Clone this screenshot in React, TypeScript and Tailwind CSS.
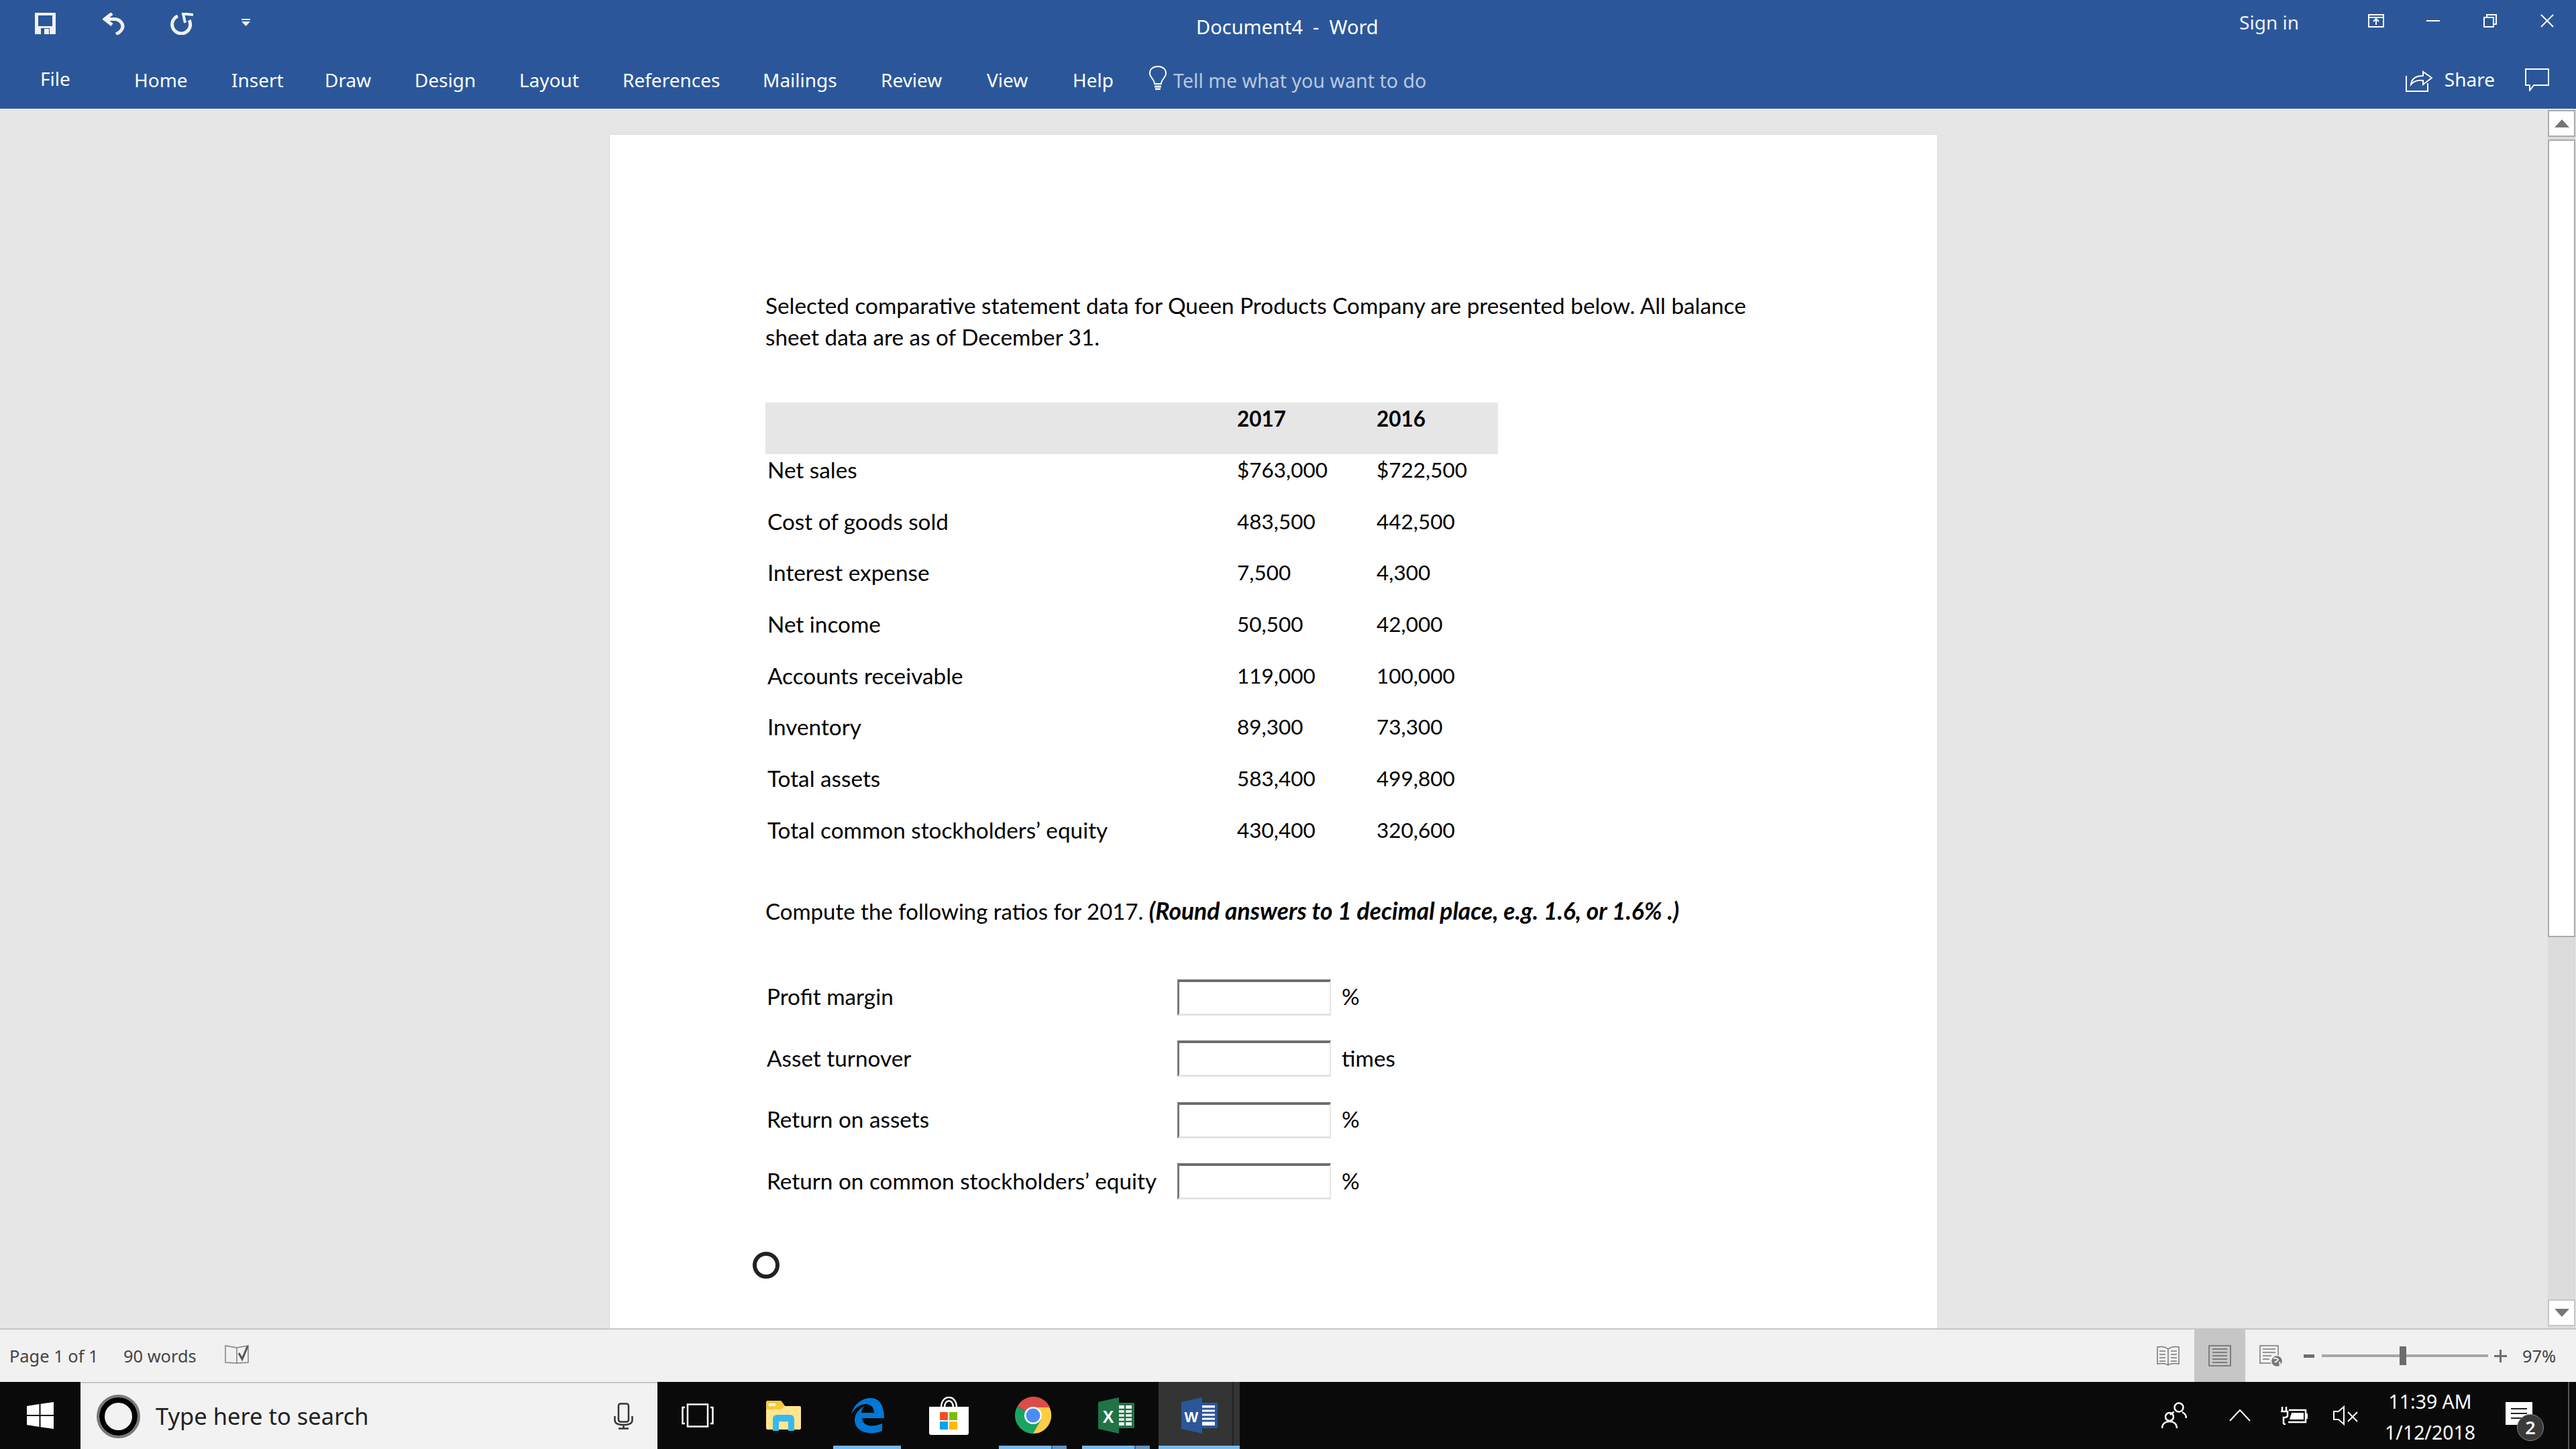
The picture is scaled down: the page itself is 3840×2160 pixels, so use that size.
const tabs = [
  { name: "Home", w: "w-[79px]" },
  { name: "Insert", w: "w-[73px]" },
  { name: "Draw", w: "w-[68px]" },
  { name: "Design", w: "w-[90px]" },
  { name: "Layout", w: "w-[88px]" },
  { name: "References", w: "w-[143px]" },
  { name: "Mailings", w: "w-[110px]" },
  { name: "Review", w: "w-[92px]" },
  { name: "View", w: "w-[62px]" },
  { name: "Help", w: "w-[60px]" },
];

const rows = [
  ["Net sales", "$763,000", "$722,500"],
  ["Cost of goods sold", "483,500", "442,500"],
  ["Interest expense", "7,500", "4,300"],
  ["Net income", "50,500", "42,000"],
  ["Accounts receivable", "119,000", "100,000"],
  ["Inventory", "89,300", "73,300"],
  ["Total assets", "583,400", "499,800"],
  ["Total common stockholders’ equity", "430,400", "320,600"],
];

const ratios = [
  ["Profit margin", "%"],
  ["Asset turnover", "times"],
  ["Return on assets", "%"],
  ["Return on common stockholders’ equity", "%"],
];

const TitleBar = () => (
  <div className="h-[162px] bg-[#2b579a] text-white font-['Noto_Sans',sans-serif] shrink-0">
    {/* Quick access row */}
    <div className="h-[81px] flex items-start relative">
      <svg className="ml-[52px] mt-[19px] shrink-0" width="31" height="32" viewBox="0 0 31 32">
        <path d="M1 0H30a1 1 0 0 1 1 1V31a1 1 0 0 1-1 1H1a1 1 0 0 1-1-1V1a1 1 0 0 1 1-1Z" fill="#f1f1f1" />
        <rect x="5" y="4" width="21" height="16" fill="#2b579a" />
        <rect x="9" y="23" width="13" height="9" fill="#2b579a" />
        <rect x="14" y="24" width="7" height="8" fill="#f1f1f1" />
      </svg>
      <svg className="ml-[70px] mt-[19px] shrink-0" width="34" height="33" viewBox="0 0 34 33" fill="none" stroke="#f1f1f1" strokeWidth="5">
        <path d="M14 1L3 9.5L14 18" />
        <path d="M4 9.5H18C27 10 32 18 29 24C27 28 24 30 20 32" />
      </svg>
      <svg className="ml-[66px] mt-[19px] shrink-0" width="36" height="33" viewBox="0 0 36 33" fill="none" stroke="#f1f1f1">
        <path d="M12 5A13.5 13.5 0 1 0 29 11" strokeWidth="5" />
        <path d="M35 3L20 1.5L23 15" strokeWidth="4" />
      </svg>
      <svg className="ml-[71px] mt-[28px] shrink-0" width="13" height="11" viewBox="0 0 13 11" fill="#f1f1f1">
        <rect width="13" height="2" />
        <path d="M0 4H13L6.5 11Z" />
      </svg>
      <div className="absolute left-[1783px] top-[20px] text-[29px] leading-[40px] whitespace-pre">Document4  -  Word</div>
      <div className="ml-auto flex items-start">
        <span className="text-[28px] leading-[40px] mt-[13px] text-[#f1f1f1]">Sign in</span>
        <svg className="ml-[103px] mt-[21px]" width="24" height="20" viewBox="0 0 24 20" fill="none" stroke="#fff" strokeWidth="2">
          <rect x="1" y="1" width="22" height="18" />
          <path d="M1 5H23M12 16V8M8 11L12 7L16 11" />
        </svg>
        <svg className="ml-[63px] mt-[30px]" width="20" height="2" viewBox="0 0 20 2">
          <rect width="20" height="2" fill="#fff" />
        </svg>
        <svg className="ml-[65px] mt-[21px]" width="20" height="20" viewBox="0 0 20 20" fill="none" stroke="#fff" strokeWidth="2">
          <rect x="1" y="5" width="14" height="14" />
          <path d="M5 5V1H19V15H15" />
        </svg>
        <svg className="ml-[65px] mr-[33px] mt-[21px]" width="20" height="20" viewBox="0 0 20 20" fill="none" stroke="#fff" strokeWidth="2">
          <path d="M1 1L19 19M19 1L1 19" />
        </svg>
      </div>
    </div>
    {/* Tabs row */}
    <div className="h-[81px] flex items-start">
      <span className="ml-[60px] w-[140px] text-[28px] leading-[40px] mt-[16px]">File</span>
      <div className="flex gap-[66px] text-[28px] leading-[40px] mt-[18px]">
        {tabs.map((tab) => (
          <span key={tab.name} className={`${tab.w} whitespace-nowrap`}>
            {tab.name}
          </span>
        ))}
      </div>
      <svg className="ml-[54px] mt-[17px] shrink-0" width="26" height="36" viewBox="0 0 26 36" fill="none" stroke="#fff" strokeWidth="2">
        <path d="M8 27C8 20 1 18 1 11C1 5 6 1 13 1C20 1 25 5 25 11C25 18 18 20 18 27Z" />
        <path d="M8 31H18M9 35H17" strokeWidth="3" />
      </svg>
      <span className="ml-[10px] text-[28.6px] leading-[40px] mt-[19px] text-[#b9c7de] whitespace-nowrap">Tell me what you want to do</span>
      <div className="ml-auto flex items-start">
        <svg className="mt-[19px]" width="40" height="37" viewBox="0 0 40 37" fill="none" stroke="#fff" strokeWidth="2">
          <path d="M1 13V36H33V24" />
          <path d="M8 26C9 17 15 13 26 13V7L39 16L26 26V20C18 19 12 21 8 26Z" />
        </svg>
        <span className="ml-[18px] text-[28px] leading-[40px] mt-[17px]">Share</span>
        <svg className="ml-[45px] mr-[40px] mt-[21px]" width="36" height="34" viewBox="0 0 36 34" fill="none" stroke="#fff" strokeWidth="2">
          <path d="M1 1H35V25H13L7 33V25H1Z" />
        </svg>
      </div>
    </div>
  </div>
);

const ScrollBar = () => (
  <div className="w-[42px] shrink-0 bg-[#dcdcdc] border-r border-[#e6e6e6] flex flex-col">
    <div className="h-[2px] bg-[#e6e6e6]" />
    <div className="h-[40px] bg-white border-2 border-[#ababab] flex items-center justify-center">
      <svg width="22" height="12" viewBox="0 0 22 12">
        <path d="M11 0L22 12H0Z" fill="#767676" />
      </svg>
    </div>
    <div className="h-[4px]" />
    <div className="h-[1189px] bg-white border-2 border-[#ababab]" />
    <div className="flex-1" />
    <div className="h-[40px] bg-white border-2 border-[#c6c6c6] flex items-center justify-center">
      <svg width="22" height="12" viewBox="0 0 22 12">
        <path d="M0 0H22L11 12Z" fill="#767676" />
      </svg>
    </div>
    <div className="h-[3px]" />
  </div>
);

const DocumentPage = () => (
  <div className="ml-[908px] w-[1981px] mt-[38px] bg-white border-t border-x border-[#dcdcdc] pl-[232px] pt-[231px] text-black font-['Lato',sans-serif] text-[33.3px] leading-[47px] shrink-0 h-[2200px]">
    <p className="w-[1500px] whitespace-nowrap">
      Selected comparative statement data for Queen Products Company are presented below. All balance
      <br />
      sheet data are as of December 31.
    </p>

    <div className="mt-[74px] w-[1092px]">
      <div className="grid grid-cols-[703px_208px_181px] h-[77px] bg-[#e6e6e6] font-bold text-[31.5px] pt-[1px]">
        <span />
        <span>2017</span>
        <span>2016</span>
      </div>
      {rows.map(([label, a, b]) => (
        <div key={label} className="grid grid-cols-[703px_208px_181px] h-[76.7px]">
          <span className="pl-[3px] whitespace-nowrap">{label}</span>
          <span className="text-[31.5px]">{a}</span>
          <span className="text-[31.5px]">{b}</span>
        </div>
      ))}
    </div>

    <p className="mt-[43px] whitespace-nowrap text-[33px]">
      Compute the following ratios for 2017. <b className="italic font-bold text-[35.4px]">(Round answers to 1 decimal place, e.g. 1.6, or 1.6% .)</b>
    </p>

    <div className="mt-[78px] flex flex-col gap-[37.5px]">
      {ratios.map(([label, unit]) => (
        <div key={label} className="flex items-center h-[54px]">
          <span className="w-[614px] pl-[2px] -mt-[2px] whitespace-nowrap">{label}</span>
          <div className="w-[229px] h-[54px] bg-white border-t-[4px] border-l-[3px] border-r-2 border-b-[3px] border-t-[#6e6e6e] border-l-[#7a7a7a] border-r-[#e6e6e6] border-b-[#e3e3e3]" />
          <span className="ml-[16px] -mt-[2px]">{unit}</span>
        </div>
      ))}
    </div>

    <div className="mt-[78px] -ml-[19px] w-[40px] h-[40px] rounded-full border-[6px] border-[#222]" />
  </div>
);

const StatusBar = () => (
  <div className="h-[80px] bg-[#f1f1f1] border-t-2 border-[#c6c6c6] flex items-center text-[#444] font-['Noto_Sans',sans-serif] text-[25.4px] shrink-0">
    <span className="ml-[14px] w-[131px] whitespace-nowrap">Page 1 of 1</span>
    <span className="ml-[39px] w-[108px] whitespace-nowrap">90 words</span>
    <svg className="ml-[43px] -mt-[4px]" width="36" height="28" viewBox="0 0 36 28" fill="none" stroke="#808080" strokeWidth="1.5">
      <path d="M1 1L18 4L35 1V26L18 27L1 26Z" />
      <path d="M18 4V27" />
      <path d="M21 12L26 21L34 2" stroke="#555" strokeWidth="3" />
    </svg>
    <div className="ml-auto flex items-center h-full">
      <svg width="34" height="30" viewBox="0 0 34 30" fill="none" stroke="#777" strokeWidth="1.5">
        <path d="M1 2C7 1 13 2 17 5C21 2 27 1 33 2V27C27 26 21 26 17 29C13 26 7 26 1 27Z" />
        <path d="M17 5V29M4 8H13M4 13H13M4 18H13M4 23H13M21 8H30M21 13H30M21 18H30M21 23H30" />
      </svg>
      <div className="ml-[22px] w-[76px] h-full bg-[#c6c6c6] flex items-center justify-center">
        <svg width="34" height="32" viewBox="0 0 34 32" fill="none" stroke="#666" strokeWidth="1.5">
          <rect x="1" y="1" width="32" height="30" />
          <path d="M6 6H28M6 11H28M6 16H28M6 21H28M6 26H28" />
        </svg>
      </div>
      <svg className="ml-[21px]" width="35" height="33" viewBox="0 0 35 33" fill="none" stroke="#777" strokeWidth="1.5">
        <path d="M1 1H28V27H1Z" />
        <path d="M5 6H24M5 11H24M5 16H18M5 21H15" />
        <circle cx="26" cy="24" r="8.5" fill="#777" stroke="#f1f1f1" />
        <path d="M21 20C24 19 27 20 28 22C27 25 24 24 23 26M29 26C31 26 32 27 30 30" stroke="#f1f1f1" strokeWidth="2" />
      </svg>
      <div className="ml-[31px] w-[16px] h-[5px] bg-[#6d6d6d]" />
      <div className="ml-[11px] w-[248px] h-[4px] bg-[#a6a6a6] flex items-center">
        <div className="ml-[116px] w-[10px] h-[28px] bg-[#6d6d6d] shrink-0" />
      </div>
      <svg className="ml-[9px]" width="19" height="19" viewBox="0 0 19 19" fill="#6d6d6d">
        <path d="M8 0H11V8H19V11H11V19H8V11H0V8H8Z" />
      </svg>
      <span className="ml-[23px] mr-[30px] w-[50px] whitespace-nowrap">97%</span>
    </div>
  </div>
);

const TaskIcon = ({ active, stacked, children }: { active?: boolean; stacked?: boolean; children: React.ReactNode }) => (
  <div className={`h-[100px] flex items-center justify-center relative shrink-0 ${active ? "w-[121px] bg-[#343434]" : "w-[101px]"}`}>
    {children}
    {(active || stacked) && <div className="absolute left-0 right-0 bottom-0 h-[5px] bg-[#76b9ed]" />}
    {stacked && <div className="absolute right-0 bottom-0 w-[23px] h-[5px] bg-[#5f95c4] border-l-2 border-[#3f6485]" />}
  </div>
);

const Taskbar = () => (
  <div className="h-[100px] bg-[#0a0a0a] flex items-center shrink-0 relative">
    <div className="w-[120px] h-full flex items-center justify-center">
      <svg width="40" height="40" viewBox="0 0 40 40" fill="#fff">
        <path d="M0 6L18.5 3V19H0ZM20.5 2.7L40 0V19H20.5ZM0 21H18.5V37L0 34ZM20.5 21H40V40L20.5 37.3Z" />
      </svg>
    </div>
    <div className="w-[860px] h-full bg-[#f2f2f2] border-t-2 border-[#c6c6c6] flex items-center">
      <div className="ml-[24px] w-[65px] h-[65px] rounded-full border-[4px] border-[#7a7a7a] shrink-0">
        <div className="w-full h-full rounded-full border-[8px] border-black" />
      </div>
      <span className="ml-[23px] font-['Noto_Sans',sans-serif] text-[34.5px] text-[#222] whitespace-nowrap">Type here to search</span>
      <svg className="ml-auto mr-[36px]" width="29" height="40" viewBox="0 0 29 40" fill="none" stroke="#333" strokeWidth="2.5">
        <rect x="7" y="1.5" width="15" height="27" rx="3" />
        <path d="M1.5 20V26C1.5 31 6 33 14.5 33C23 33 27.5 31 27.5 26V20M14.5 33V38M7 38.5H22" />
      </svg>
    </div>
    {/* Task view */}
    <div className="ml-[36px] shrink-0">
      <svg width="48" height="36" viewBox="0 0 48 36" fill="none" stroke="#fff" strokeWidth="2.5">
        <rect x="9" y="1.5" width="30" height="33" />
        <path d="M5 6H1.5V30H5M43 6H46.5V30H43" />
      </svg>
    </div>
    {/* Explorer */}
    <svg className="ml-[78px] shrink-0" width="52" height="46" viewBox="0 0 52 46">
      <path d="M0 4a3 3 0 0 1 3-3H22L28 9H50a2 2 0 0 1 2 2V42a2 2 0 0 1-2 2H2a2 2 0 0 1-2-2Z" fill="#ffe68f" />
      <path d="M0 4a3 3 0 0 1 3-3H22L28 9L22 14H0Z" fill="#f9c93c" />
      <rect x="4" y="5" width="10" height="4" fill="#fff" />
      <path d="M10 46V28a6 6 0 0 1 6-6H36a6 6 0 0 1 6 6V46H33V32H19V46Z" fill="#3ab7ee" />
    </svg>
    <div className="ml-[48px] flex">
      <div className="w-[101px] h-[100px] flex items-center justify-center relative shrink-0">
        {/* Edge */}
        <svg width="50" height="53" viewBox="0 0 50 53">
          <path d="M1 24C5 8 18 0 30 0C42 0 50 10 50 30H17C18 41 30 45 47 38V49C30 56 7 52 6 33C6 24 12 16 21 12C17 16 16 19 16 22H35C35 14 30 9 23 9C14 9 6 15 1 24Z" fill="#0078d7" />
        </svg>
        <div className="absolute left-0 right-0 bottom-0 h-[5px] bg-[#76b9ed]" />
      </div>
    </div>
    <div className="ml-[42px] shrink-0">
      {/* Store */}
      <svg width="59" height="57" viewBox="0 0 59 57">
        <path d="M18 16C18 -4 41 -4 41 16M23 16C23 3 36 3 36 16" fill="none" stroke="#fff" strokeWidth="2.5" />
        <path d="M0 15H59V54a3 3 0 0 1-3 3H3a3 3 0 0 1-3-3Z" fill="#fff" />
        <rect x="16" y="23" width="12" height="12" fill="#f25022" />
        <rect x="30" y="23" width="12" height="12" fill="#7fba00" />
        <rect x="16" y="37" width="12" height="12" fill="#00a4ef" />
        <rect x="30" y="37" width="12" height="12" fill="#ffb900" />
      </svg>
    </div>
    <div className="ml-[45px] flex">
      <TaskIcon stacked>
        {/* Chrome */}
        <svg width="56" height="56" viewBox="0 0 56 56">
          <path d="M28 28L4.6 14.5A27 27 0 0 1 52.4 14.5Z" fill="#db4d45" />
          <path d="M28 16H52.4A27 27 0 0 1 28 55Z" fill="#fdcd45" />
          <path d="M28 28L4.6 14.5A27 27 0 0 0 28 55L40 34Z" fill="#1ba362" />
          <path d="M16 21L28 28V16H52.4L53 14.5H28Z" fill="#db4d45" />
          <circle cx="28" cy="28" r="13" fill="#fff" />
          <circle cx="28" cy="28" r="10.5" fill="#4e8cf5" />
        </svg>
      </TaskIcon>
    </div>
    <div className="ml-[23px] flex">
      <TaskIcon stacked>
        {/* Excel */}
        <svg width="54" height="54" viewBox="0 0 54 54">
          <rect x="26" y="8" width="28" height="38" rx="2" fill="#217346" />
          <rect x="31" y="12" width="19" height="30" fill="#fff" />
          <path d="M31 18H50M31 24H50M31 30H50M31 36H50M40 12V42" stroke="#217346" strokeWidth="2.5" />
          <path d="M0 7L31 0V54L0 47Z" fill="#217346" />
          <text x="15" y="38" textAnchor="middle" fill="#fff" fontFamily="Liberation Sans, sans-serif" fontWeight="700" fontSize="25">X</text>
        </svg>
      </TaskIcon>
    </div>
    <div className="ml-[13px] flex">
      <TaskIcon active>
        {/* Word */}
        <svg width="54" height="54" viewBox="0 0 54 54">
          <rect x="26" y="8" width="28" height="38" rx="2" fill="#2b579a" />
          <rect x="31" y="12" width="19" height="30" fill="#fff" />
          <path d="M31 17H50M31 23H50M31 29H50M31 35H50" stroke="#2b579a" strokeWidth="3" />
          <path d="M0 7L31 0V54L0 47Z" fill="#2b579a" />
          <text x="15" y="37" textAnchor="middle" fill="#fff" fontFamily="Liberation Sans, sans-serif" fontWeight="700" fontSize="22">W</text>
        </svg>
        <div className="absolute right-[9px] top-0 bottom-0 w-[2px] bg-[#222]" />
      </TaskIcon>
    </div>
    {/* Tray */}
    <div className="ml-auto flex items-center h-full text-white font-['Noto_Sans',sans-serif]">
      <svg width="38" height="40" viewBox="0 0 38 40" fill="none" stroke="#fff" strokeWidth="2.5">
        <circle cx="12" cy="22" r="6" />
        <path d="M1 39C1 32 6 29 12 29C18 29 23 32 23 39" />
        <circle cx="26" cy="8" r="6.5" />
        <path d="M19 15C15 16 14 18 13 19M31 15C35 17 37 20 37 24" />
      </svg>
      <svg className="ml-[63px]" width="32" height="18" viewBox="0 0 32 18" fill="none" stroke="#fff" strokeWidth="2">
        <path d="M1 17L16 1L31 17" />
      </svg>
      <svg className="ml-[44px]" width="41" height="28" viewBox="0 0 41 28" fill="none" stroke="#fff" strokeWidth="2">
        <path d="M3 1V8M9 1V8M1 8H11V14C11 16 9 17 6 17H5V27M5 27H8" strokeWidth="2.5" />
        <path d="M13 6H38V24H12" strokeWidth="2.5" />
        <path d="M17 10H35V20H14Z" fill="#fff" stroke="none" />
        <rect x="38" y="11" width="3" height="8" fill="#fff" stroke="none" />
      </svg>
      <svg className="ml-[38px]" width="37" height="30" viewBox="0 0 37 30" fill="none" stroke="#fff" strokeWidth="2">
        <path d="M1 9H8L16 2V28L8 21H1Z" />
        <path d="M22 10L36 24M36 10L22 24" />
      </svg>
      <div className="ml-[40px] w-[135px] mt-[4px] flex flex-col items-center text-[28.4px] leading-[46px] text-white">
        <span className="whitespace-nowrap">11:39 AM</span>
        <span className="whitespace-nowrap">1/12/2018</span>
      </div>
      <div className="ml-[45px] mr-[65px] relative w-[40px] h-[34px] -mt-[6px] bg-white flex flex-col justify-center gap-[5px] px-[8px]">
        <div className="h-[2px] bg-[#222]" />
        <div className="h-[2px] bg-[#222]" />
        <div className="h-[2px] bg-[#222]" />
        <div className="absolute left-[17px] top-[18px] w-[40px] h-[40px] rounded-full bg-[#3a3a3a] border border-[#888] flex items-center justify-center text-white text-[27px] font-semibold">2</div>
      </div>
    </div>
    <div className="absolute right-[10px] top-0 bottom-0 w-[2px] bg-[#555]" />
  </div>
);

const App = () => {
  return (
    <div className="w-[3840px] h-[2160px] overflow-hidden flex flex-col bg-[#e6e6e6]">
      <TitleBar />
      <div className="flex-1 min-h-0 flex justify-between overflow-hidden">
        <DocumentPage />
        <ScrollBar />
      </div>
      <StatusBar />
      <Taskbar />
    </div>
  );
};

export default App;
